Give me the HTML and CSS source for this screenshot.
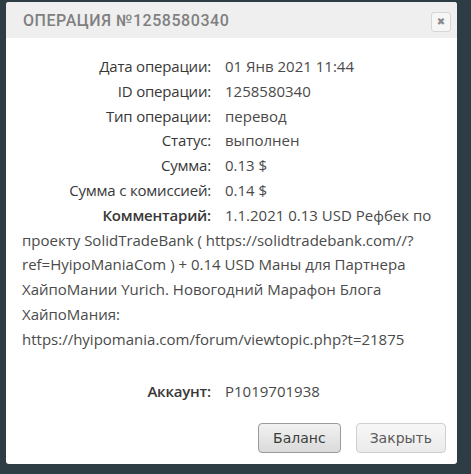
FILE: index.html
```html
<!DOCTYPE html>
<html lang="ru">
<head>
<meta charset="utf-8">
<title>Операция</title>
<link rel="stylesheet" href="styles.css">
</head>
<body>
<div class="dialog">
  <div class="header">
    <span class="title">ОПЕРАЦИЯ №1258580340</span>
    <button class="close" aria-label="Закрыть">&#x2716;</button>
  </div>
  <div class="content">
    <div class="row"><span class="label">Дата операции:</span>01 Янв 2021 11:44</div>
    <div class="row"><span class="label">ID операции:</span>1258580340</div>
    <div class="row"><span class="label">Тип операции:</span>перевод</div>
    <div class="row"><span class="label">Статус:</span>выполнен</div>
    <div class="row"><span class="label">Сумма:</span>0.13 $</div>
    <div class="row"><span class="label">Сумма с комиссией:</span>0.14 $</div>
    <div class="row"><span class="label strong">Комментарий:</span>1.1.2021 0.13 USD Рефбек по проекту SolidTradeBank ( https://solidtradebank.com//?ref=HyipoManiaCom ) + 0.14 USD Маны для Партнера ХайпоМании Yurich. Новогодний Марафон Блога ХайпоМания: https://hyipomania.com/forum/viewtopic.php?t=21875</div>
    <div class="row spaced"><span class="label strong">Аккаунт:</span>P1019701938</div>
  </div>
  <div class="footer">
    <button class="btn btn-primary">Баланс</button>
    <button class="btn">Закрыть</button>
  </div>
</div>
</body>
</html>
```

FILE: styles.css
```css
html, body {
  margin: 0;
  padding: 0;
}
body {
  background: #2e3c44;
  width: 471px;
  height: 474px;
  padding: 2px 0 0 6px;
  box-sizing: border-box;
}
.dialog {
  width: 451px;
  height: 462px;
  background: #ffffff;
  border-radius: 3px;
  display: flex;
  flex-direction: column;
  overflow: hidden;
}
.header {
  height: 36px;
  background: #efefef;
  display: flex;
  align-items: center;
  justify-content: space-between;
  padding: 0 6px 0 17px;
}
.title {
  font-family: Roboto, sans-serif;
  font-weight: 500;
  font-size: 16px;
  color: #808080;
  letter-spacing: 0.55px;
  margin-top: 1px;
}
.close {
  width: 20px;
  height: 20px;
  padding: 0;
  margin-top: 4px;
  border: 1px solid #d6d6d6;
  border-radius: 3px;
  background: #f6f6f6;
  color: #8a8a8a;
  font-size: 10px;
  line-height: 18px;
  font-family: "DejaVu Sans", sans-serif;
}
.content {
  flex: 1;
  padding: 16px 16px 0 16px;
  font-family: "Open Sans", sans-serif;
  font-size: 15px;
  line-height: 24.8px;
  color: #4a4a4a;
}
.label {
  display: inline-block;
  width: 189px;
  margin-right: 14px;
  text-align: right;
  color: #383838;
  letter-spacing: -0.2px;
}
.label.strong {
  font-weight: 600;
}
.spaced {
  margin-top: 27px;
}
.footer {
  display: flex;
  justify-content: flex-end;
  gap: 15px;
  padding: 0 11px 11px 0;
}
.btn {
  font-family: "DejaVu Sans", sans-serif;
  font-size: 14px;
  height: 30px;
  padding: 0 13px;
  border: 1px solid #cfcfcf;
  border-radius: 4px;
  background: linear-gradient(#f7f7f7, #ebebeb);
  color: #5a5a5a;
}
.btn-primary {
  border-color: #9a9a9a;
  background: linear-gradient(#f2f2f2, #dadada);
  color: #3c3c3c;
  padding: 0 14px;
}
```
